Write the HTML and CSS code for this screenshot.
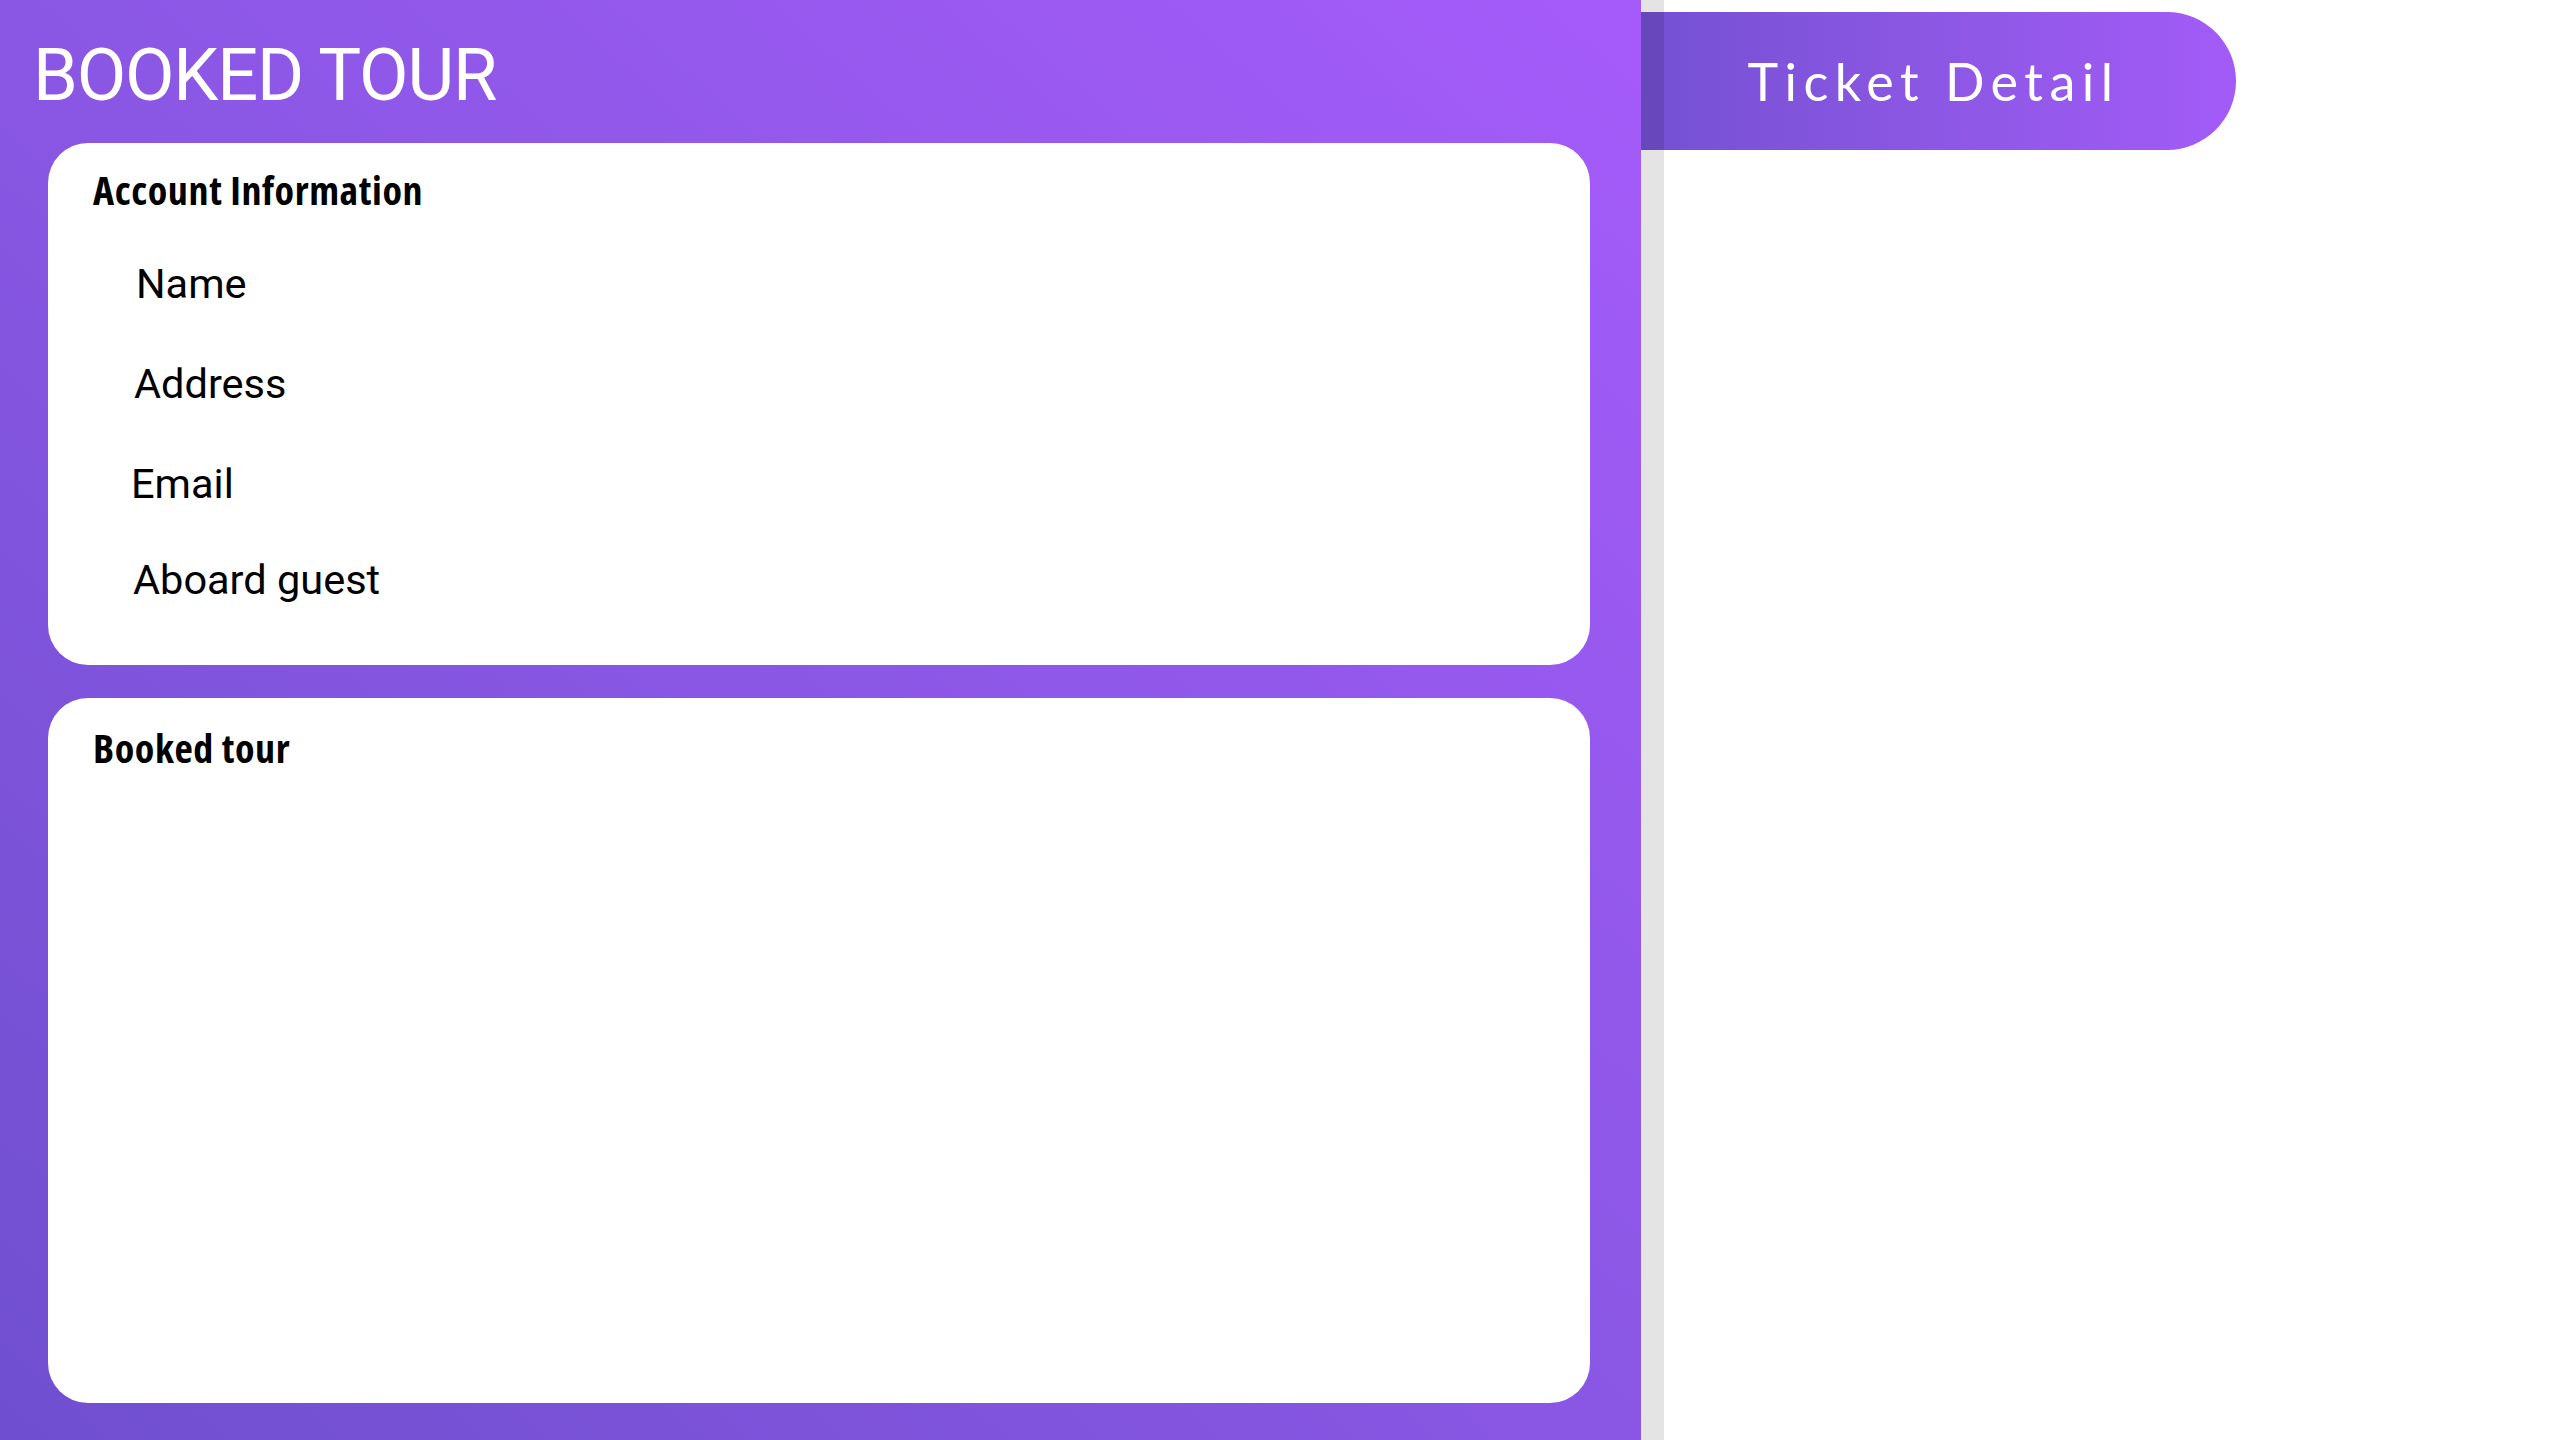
FILE: index.html
```html
<!DOCTYPE html>
<html lang="en">
<head>
<meta charset="utf-8">
<title>Booked Tour</title>
<link rel="stylesheet" href="styles.css">
</head>
<body>
<div class="page">
  <main class="panel">
    <h1 class="title">BOOKED TOUR</h1>
    <section class="card card-info">
      <h2 class="card-heading">Account Information</h2>
      <ul class="fields">
        <li class="field field-name">Name</li>
        <li class="field field-address">Address</li>
        <li class="field field-email">Email</li>
        <li class="field field-guest">Aboard guest</li>
      </ul>
    </section>
    <section class="card card-tours">
      <h2 class="card-heading">Booked tour</h2>
    </section>
  </main>
  <div class="divider"></div>
  <aside class="side">
    <div class="pill">Ticket Detail</div>
  </aside>
</div>
</body>
</html>
```

FILE: styles.css
```css
html, body {
  margin: 0;
  padding: 0;
  background: #ffffff;
}

.page {
  display: flex;
  width: 2560px;
  height: 1440px;
  overflow: hidden;
}

.panel {
  width: 1641px;
  height: 1440px;
  box-sizing: border-box;
  padding: 0 51px 37px 48px;
  display: flex;
  flex-direction: column;
  background: linear-gradient(to top right, #6f4fcf 0%, #8a57e4 50%, #a55bfa 100%);
}

.title {
  margin: 0 0 31px -15px;
  padding-top: 40px;
  font-family: Roboto, "Noto Sans", sans-serif;
  font-weight: 400;
  font-size: 72px;
  line-height: 72px;
  letter-spacing: -1.2px;
  color: #ffffff;
}

.card {
  background: #ffffff;
  border-radius: 40px;
  box-sizing: border-box;
  padding: 27px 45px 0 45px;
}

.card-info {
  height: 522px;
  flex: none;
}

.card-tours {
  margin-top: 33px;
  padding-top: 30px;
  flex: 1;
}

.card-heading {
  margin: 0;
  font-family: "Open Sans", Roboto, sans-serif;
  font-stretch: 75%;
  font-weight: 700;
  font-size: 40px;
  line-height: 39px;
  letter-spacing: 0.6px;
  color: #000000;
}

.fields {
  list-style: none;
  margin: 25px 0 0 0;
  padding: 0 0 0 40px;
}

.field {
  font-family: Roboto, "Noto Sans", sans-serif;
  font-size: 41.5px;
  line-height: 100px;
  height: 100px;
  color: #000000;
}

.field-name { padding-left: 3px; }
.field-address { padding-left: 1px; }
.field-email { margin-left: -2px; }
.field-guest { height: 96px; line-height: 92px; }

.divider {
  width: 23px;
  flex: none;
  height: 1440px;
  background: rgba(0, 0, 0, 0.105);
  position: relative;
  z-index: 1;
}

.side {
  flex: 1;
}

.pill {
  margin: 12px 0 0 -23px;
  width: 595px;
  height: 138px;
  box-sizing: border-box;
  padding-right: 10px;
  border-radius: 0 69px 69px 0;
  background: linear-gradient(to right, #7450d3 0%, #8a57e2 45%, #a35bf8 100%);
  display: flex;
  align-items: center;
  justify-content: center;
  font-family: Lato, "Open Sans", sans-serif;
  font-weight: 400;
  font-size: 52px;
  letter-spacing: 6.5px;
  color: #ffffff;
}
```
